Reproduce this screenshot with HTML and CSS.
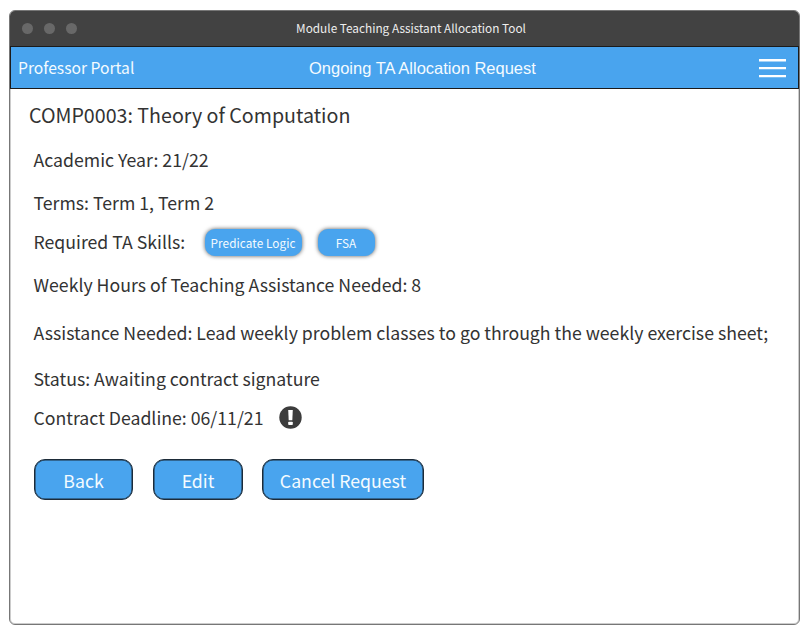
FILE: index.html
```html
<!DOCTYPE html>
<html lang="en">
<head>
<meta charset="utf-8">
<title>Module Teaching Assistant Allocation Tool</title>
<link rel="stylesheet" href="styles.css">
</head>
<body>
<div class="window">
  <header class="titlebar">
    <div class="dots"><i></i><i></i><i></i></div>
    <span class="window-title">Module Teaching Assistant Allocation Tool</span>
  </header>
  <nav class="navbar">
    <span class="portal">Professor Portal</span>
    <span class="page-title">Ongoing TA Allocation Request</span>
    <svg class="menu" width="27" height="20" viewBox="0 0 27 20"><path d="M0 2.2H27M0 10.1H27M0 18.1H27" stroke="#fff" stroke-width="2.4"/></svg>
  </nav>
  <main class="content">
    <h1><span>COMP0003: Theory of Computation</span></h1>
    <p class="row year"><span>Academic Year: 21/22</span></p>
    <p class="row terms"><span>Terms: Term 1, Term 2</span></p>
    <div class="row skills"><span>Required TA Skills:</span><b class="tag logic">Predicate Logic</b><b class="tag fsa">FSA</b></div>
    <p class="row hours"><span>Weekly Hours of Teaching Assistance Needed: 8</span></p>
    <p class="row needed"><span>Assistance Needed: Lead weekly problem classes to go through the weekly exercise sheet;</span></p>
    <p class="row status"><span>Status: Awaiting contract signature</span></p>
    <div class="row deadline"><span>Contract Deadline: 06/11/21</span>
      <svg class="alert" width="23" height="23" viewBox="0 0 23 23"><circle cx="11.5" cy="11.5" r="11.2" fill="#3c3c3c"/><path d="M9.2 4h4.6l-.5 10.2H9.7z" fill="#fff"/><rect x="9.2" y="15.7" width="4.6" height="3.4" rx=".8" fill="#fff"/></svg>
    </div>
    <div class="actions">
      <button class="back">Back</button>
      <button class="edit">Edit</button>
      <button class="cancel">Cancel Request</button>
    </div>
  </main>
</div>
</body>
</html>
```
FILE: styles.css
```css
* { box-sizing: border-box; }
body {
  margin: 0;
  padding: 10px 0 0 9px;
  background: #fff;
  color: #333;
  font-family: "Noto Sans CJK SC", "Noto Sans", sans-serif;
}
.window {
  width: 791px;
  height: 615px;
  border: 1px solid #777;
  border-radius: 6px;
  box-shadow: inset 0 0 0 1px #ccc;
  overflow: hidden;
}
.titlebar {
  display: grid;
  grid-template-columns: 100px 1fr 87px;
  align-items: center;
  height: 35px;
  padding-bottom: 1px;
  background: #424242;
  color: #eee;
}
.dots { display: flex; gap: 11px; padding-left: 12px; }
.dots i { width: 11px; height: 11px; border-radius: 50%; background: #686868; }
.window-title { text-align: center; font-size: 11.8px; line-height: 20px; }
.navbar {
  display: grid;
  grid-template-columns: 200px 1fr 27px;
  align-items: center;
  height: 43px;
  padding: 0 12px 0 7px;
  border: 1px solid #1b1b1b;
  background: #49a4ee;
  color: #f4fbff;
}
.portal { font-size: 15.65px; line-height: 24px; }
.page-title {
  padding-left: 91px;
  font-family: "Liberation Sans", sans-serif;
  font-size: 16.5px;
  line-height: 24px;
}
.menu { display: block; }
.content { padding: 12px 0 0 23.5px; }
h1 { margin: 0 0 0 -4.5px; font-size: 19.65px; font-weight: 400; line-height: 28px; }
.row {
  display: flex;
  align-items: center;
  height: 28px;
  margin: 0;
  font-size: 17.7px;
  line-height: 28px;
  white-space: nowrap;
}
.year { margin-top: 16px; }
.terms { margin-top: 15px; }
.skills { margin-top: 11px; }
.hours { margin-top: 15px; }
.needed { margin-top: 20px; }
.status { margin-top: 18px; }
.deadline { margin-top: 11px; }
.tag {
  height: 27px;
  margin-top: 2px;
  border-radius: 10px;
  background: #49a4ee;
  box-shadow: 0 0 4px rgba(0, 0, 0, .65);
  color: #f4fbff;
  font-size: 11.8px;
  font-weight: 400;
  line-height: 27px;
  text-align: center;
}
.logic { width: 97px; margin-left: 19.3px; }
.fsa { width: 57px; margin-left: 16px; }
.alert { margin-left: 15.3px; }
.actions { display: flex; margin: 28px 0 0 .5px; }
button {
  height: 41px;
  padding: 0;
  border: 1px solid #1d2b38;
  border-radius: 11px;
  background: #49a4ee;
  box-shadow: inset 0 0 0 .5px #1d2b38;
  color: #f4fbff;
  font: 17.7px/38px "Noto Sans CJK SC", "Noto Sans", sans-serif;
}
.back { width: 99px; }
.edit { width: 90px; margin-left: 20px; }
.cancel { width: 162px; margin-left: 19px; }
.tag, button { letter-spacing: 0; }
.logic { letter-spacing: .06px; }
```
